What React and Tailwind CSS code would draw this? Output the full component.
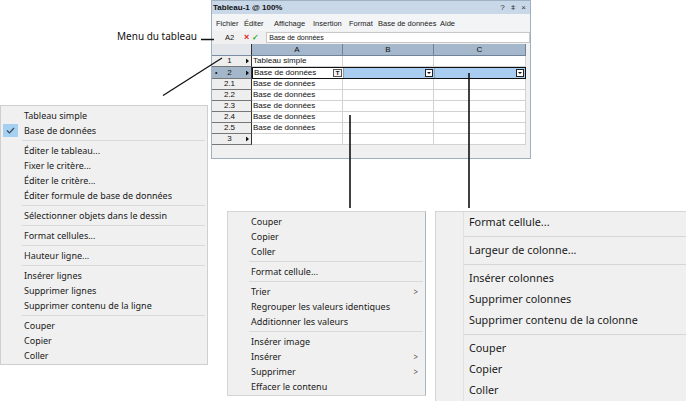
import React from "react";

const Arrow = () => (
  <svg width="3" height="5" viewBox="0 0 3 5" className="block">
    <path d="M0 0 L3 2.5 L0 5 Z" fill="#111" />
  </svg>
);

const DropBox = () => (
  <div className="w-[8px] h-[8px] bg-white border border-[#222] flex items-center justify-center">
    <svg width="4" height="2" viewBox="0 0 4 2"><path d="M0 0 L4 0 L2 2 Z" fill="#111" /></svg>
  </div>
);

function RowHeader({ label, arrow, dot, selected, h }) {
  return (
    <div
      className={`w-[40px] ${h} relative flex items-center justify-center border-r border-r-[#333] border-b border-b-[#777] ${
        selected ? "bg-[#a4b7ca]" : "bg-[#eeeeee]"
      }`}
    >
      {dot && <span className="absolute left-[3px] top-[2px] text-[7px] leading-none">•</span>}
      <span className="text-[8px] leading-none -ml-[4px]">{label}</span>
      {arrow && (
        <span className="absolute right-[2px] top-1/2 -translate-y-1/2">
          <Arrow />
        </span>
      )}
    </div>
  );
}

function BodyRow({ label, a, arrow }) {
  return (
    <div className="flex h-[11px]">
      <RowHeader label={label} arrow={arrow} h="h-[11px]" />
      <div className="w-[91px] h-[11px] bg-white border-r border-b border-[#d2d2d2] flex items-center pl-[1px] text-[8px] leading-none">
        {a}
      </div>
      <div className="w-[91px] h-[11px] bg-white border-r border-b border-[#d2d2d2]" />
      <div className="w-[92px] h-[11px] bg-white border-r border-b border-[#d2d2d2]" />
    </div>
  );
}

function Item({ children, sub, check }) {
  return (
    <div className="h-[15px] flex items-center">
      <div className="w-[23px] h-[15px] flex items-center pl-[2px]">
        {check && (
          <div className="w-[15px] h-[13px] bg-[#a6d0f2] flex items-center justify-center">
            <svg width="9" height="7" viewBox="0 0 9 7">
              <path d="M1 3.5 L3.5 6 L8 1" fill="none" stroke="#3a4a5a" strokeWidth="1.2" />
            </svg>
          </div>
        )}
      </div>
      <span className="flex-1 text-[9px] leading-none text-[#1a1a1a]">{children}</span>
      {sub && <span className="text-[8px] leading-none text-[#555] pr-[7px]">&gt;</span>}
    </div>
  );
}

const Sep = ({ ml = "ml-[21px]" }) => <div className={`h-px bg-[#d9d9d9] ${ml} mr-[2px] my-[2px]`} />;

function RItem({ children }) {
  return (
    <div className="h-[21px] flex">
      <div className="w-[28px] border-r border-[#e0e0e0]" />
      <span className="pl-[5px] flex items-center text-[10.8px] leading-none text-[#1a1a1a]">{children}</span>
    </div>
  );
}

const RSep = () => (
  <div className="h-[7px] flex">
    <div className="w-[28px] border-r border-[#e0e0e0]" />
    <div className="flex-1 flex items-center">
      <div className="h-px w-full bg-[#d6d6d6]" />
    </div>
  </div>
);

export default function App() {
  return (
    <div className="relative w-[686px] h-[401px] bg-white overflow-hidden font-['Noto_Sans',sans-serif]">
      {/* Window */}
      <div className="absolute left-[211px] top-0 w-[320px] h-[159px] bg-[#f0f0f0] border border-[#9fb0c2] flex flex-col font-['Liberation_Sans',Arial,sans-serif] text-[#111]">
        <div className="h-[13px] bg-[#c8d8e9] flex items-center justify-between pl-[1px] pr-[4px]">
          <span className="text-[8px] font-bold leading-none">Tableau-1 @ 100%</span>
          <div className="flex items-center gap-[6px] text-[8px] leading-none text-[#333]">
            <span>?</span>
            <span>ǂ</span>
            <span>×</span>
          </div>
        </div>
        <div className="h-[17px] bg-[#f3f4f6] flex items-center pt-[3px] pl-[4px] text-[7.5px] leading-none text-[#222]">
          <span className="w-[28px]">Fichier</span>
          <span className="w-[30px]">Éditer</span>
          <span className="w-[39px]">Affichage</span>
          <span className="w-[36px]">Insertion</span>
          <span className="w-[29px]">Format</span>
          <span className="w-[62px]">Base de données</span>
          <span>Aide</span>
        </div>
        <div className="h-[13px] flex items-center">
          <span className="w-[27px] text-center text-[7.5px] leading-none pl-[8px]">A2</span>
          <span className="ml-[5px] text-[9px] leading-none font-bold text-[#d22]">×</span>
          <span className="ml-[3px] text-[8px] leading-none font-bold text-[#2a2]">✓</span>
          <div className="ml-[7px] w-[264px] h-[11px] bg-white border border-[#c8c8c8] flex items-center pl-[2px] text-[7px] leading-none">
            Base de données
          </div>
        </div>
        {/* grid */}
        <div className="flex flex-col">
          <div className="flex h-[12px]">
            <div className="w-[40px] bg-[#e2e6ea] border-r border-r-[#333] border-b border-[#7a8da2]" />
            <div className="w-[91px] bg-[#a4b7cb] border-r border-b border-[#6f849b] flex items-center justify-center text-[8px] leading-none">A</div>
            <div className="w-[91px] bg-[#a4b7cb] border-r border-b border-[#6f849b] flex items-center justify-center text-[8px] leading-none">B</div>
            <div className="w-[92px] bg-[#a4b7cb] border-r border-b border-[#6f849b] flex items-center justify-center text-[8px] leading-none">C</div>
          </div>
          <BodyRow label="1" a="Tableau simple" arrow />
          <div className="flex h-[12px]">
            <RowHeader label="2" arrow dot selected h="h-[12px]" />
            <div className="flex w-[274px] h-[12px] border border-[#111]">
              <div className="w-[91px] bg-white flex items-center justify-between pl-[1px] pr-[1px] text-[8px] leading-none border-r border-[#999]">
                <span>Base de données</span>
                <div className="w-[9px] h-[8px] border border-[#555] bg-[#f4f4f4] flex items-center justify-center text-[6px] font-bold leading-none">T</div>
              </div>
              <div className="w-[91px] bg-[#a9cdf0] flex items-center justify-end pr-[1px] border-r border-[#8aa]">
                <DropBox />
              </div>
              <div className="flex-1 bg-[#a9cdf0] flex items-center justify-end pr-[1px]">
                <DropBox />
              </div>
            </div>
          </div>
          <BodyRow label="2.1" a="Base de données" />
          <BodyRow label="2.2" a="Base de données" />
          <BodyRow label="2.3" a="Base de données" />
          <BodyRow label="2.4" a="Base de données" />
          <BodyRow label="2.5" a="Base de données" />
          <BodyRow label="3" a="" arrow />
        </div>
        <div className="flex-1 bg-[#f0f0f0]" />
      </div>

      {/* Label */}
      <div className="absolute left-[117px] top-[31px] text-[10px] leading-none text-[#111]">Menu du tableau</div>

      {/* Left menu */}
      <div className="absolute left-0 top-[105px] w-[208px] bg-[#f0f0f0] border border-[#cfcfcf] pt-[2px] pb-[1px]">
        <Item>Tableau simple</Item>
        <Item check>Base de données</Item>
        <Sep />
        <Item>Éditer le tableau...</Item>
        <Item>Fixer le critère...</Item>
        <Item>Éditer le critère...</Item>
        <Item>Éditer formule de base de données</Item>
        <Sep />
        <Item>Sélectionner objets dans le dessin</Item>
        <Sep />
        <Item>Format cellules...</Item>
        <Sep />
        <Item>Hauteur ligne...</Item>
        <Sep />
        <Item>Insérer lignes</Item>
        <Item>Supprimer lignes</Item>
        <Item>Supprimer contenu de la ligne</Item>
        <Sep />
        <Item>Couper</Item>
        <Item>Copier</Item>
        <Item>Coller</Item>
      </div>

      {/* Middle menu */}
      <div className="absolute left-[227px] top-[211px] w-[199px] bg-[#f0f0f0] border border-[#d4d4d4] border-r-[#a9b5c3] pt-[2px] pb-[1px]">
        <Item>Couper</Item>
        <Item>Copier</Item>
        <Item>Coller</Item>
        <Sep />
        <Item>Format cellule...</Item>
        <Sep />
        <Item sub>Trier</Item>
        <Item>Regrouper les valeurs identiques</Item>
        <Item>Additionner les valeurs</Item>
        <Sep />
        <Item>Insérer image</Item>
        <Item sub>Insérer</Item>
        <Item sub>Supprimer</Item>
        <Item>Effacer le contenu</Item>
      </div>

      {/* Right menu */}
      <div className="absolute left-[435px] top-[211px] w-[260px] bg-[#f0f0f0] border border-[#d4d4d4]">
        <RItem>Format cellule...</RItem>
        <RSep />
        <RItem>Largeur de colonne...</RItem>
        <RSep />
        <RItem>Insérer colonnes</RItem>
        <RItem>Supprimer colonnes</RItem>
        <RItem>Supprimer contenu de la colonne</RItem>
        <RSep />
        <RItem>Couper</RItem>
        <RItem>Copier</RItem>
        <RItem>Coller</RItem>
      </div>

      {/* Callout lines */}
      <svg className="absolute left-0 top-0 pointer-events-none" width="686" height="401" viewBox="0 0 686 401">
        <line x1="201" y1="39.5" x2="214" y2="39.5" stroke="#111" strokeWidth="1.5" />
        <line x1="222" y1="58" x2="163" y2="95.5" stroke="#111" strokeWidth="1.3" />
        <line x1="350" y1="115" x2="350" y2="208" stroke="#111" strokeWidth="1.6" />
        <line x1="469" y1="73" x2="469" y2="208" stroke="#111" strokeWidth="1.6" />
      </svg>
    </div>
  );
}
